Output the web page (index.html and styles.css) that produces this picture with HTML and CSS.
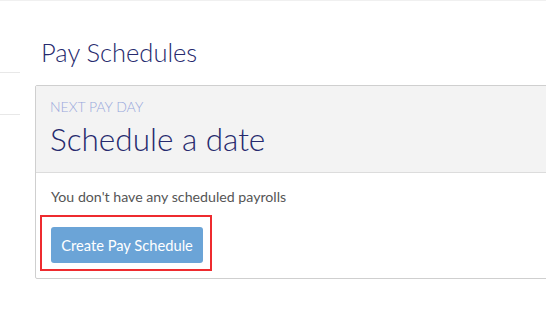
FILE: index.html
```html
<!DOCTYPE html>
<html>
<head>
<meta charset="utf-8">
<link rel="stylesheet" href="styles.css">
</head>
<body>
<div class="page">
  <aside class="sidebar">
    <div class="nav-item"></div>
  </aside>
  <main class="main">
    <h1 class="title">Pay Schedules</h1>
    <section class="card">
      <header class="card-head">
        <div class="eyebrow">NEXT PAY DAY</div>
        <div class="big">Schedule a date</div>
      </header>
      <div class="card-body">
        <p class="note">You don't have any scheduled payrolls</p>
        <div class="btn-wrap">
          <button class="btn">Create Pay Schedule</button>
          <span class="highlight"></span>
        </div>
      </div>
    </section>
  </main>
</div>
</body>
</html>
```
FILE: styles.css
```css
html, body {
  margin: 0;
  padding: 0;
  background: #fff;
  overflow: hidden;
}
body {
  font-family: Lato, "Open Sans", sans-serif;
  width: 546px;
  height: 325px;
}
.page {
  display: flex;
  border-top: 1px solid #f0f0f0;
  height: 324px;
}
.sidebar {
  width: 20px;
  flex: none;
  padding-top: 71px;
}
.nav-item {
  height: 41px;
  border-top: 1px solid #e8e8e8;
  border-bottom: 1px solid #e8e8e8;
}
.main {
  flex: 1;
  padding-left: 15px;
  min-width: 0;
}
.title {
  margin: 0;
  padding-top: 36px;
  font-family: "Lato Light", Lato, sans-serif;
  font-weight: 300;
  font-size: 25.5px;
  line-height: 30px;
  color: #262a6e;
  padding-left: 6px;
}
.card {
  margin-top: 18px;
  margin-right: -20px;
  border: 1px solid #cfcfcf;
  border-radius: 2px;
  background: #fff;
}
.card-head {
  background: #f3f3f3;
  padding: 13px 14px 13px;
  border-bottom: 1px solid #dcdcdc;
}
.eyebrow {
  font-family: "Lato Light", Lato, sans-serif;
  font-weight: 300;
  font-size: 14px;
  line-height: 16px;
  color: #98a8dc;
}
.big {
  margin-top: 4px;
  font-family: "Lato Light", Lato, sans-serif;
  font-weight: 300;
  font-size: 31.5px;
  line-height: 40px;
  color: #262a6e;
}
.card-body {
  padding: 15px 15px 15px;
}
.note {
  margin: 0;
  font-size: 14.2px;
  line-height: 18px;
  color: #555;
}
.btn-wrap {
  position: relative;
  display: inline-block;
  margin-top: 21px;
  vertical-align: top;
}
.btn {
  display: block;
  width: 152px;
  height: 36px;
  border: 0;
  border-radius: 3px;
  background: #6ba4d7;
  color: #fff;
  font-family: Lato, sans-serif;
  font-size: 14.7px;
  padding: 0;
}
.highlight {
  position: absolute;
  left: -11px;
  top: -12px;
  right: -9px;
  bottom: -8px;
  border: 2px solid #ee2b2f;
}
```
